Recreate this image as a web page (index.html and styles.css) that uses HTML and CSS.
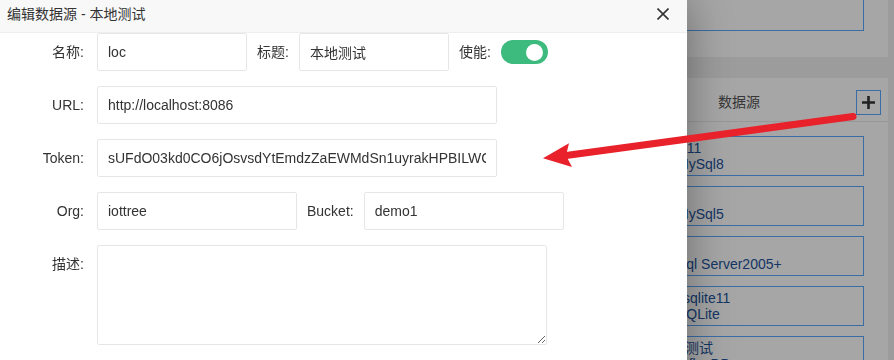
FILE: index.html
```html
<!doctype html>
<html lang="zh-CN">
<head>
  <meta charset="UTF-8" />
  <title>编辑数据源</title>
  <link rel="stylesheet" href="styles.css">
</head>
<body>
  <div class="page">
    <aside class="side">
      <div class="panel panel-top">
        <div class="src-card tall">
          <div>local</div>
          <div>InfluxDB</div>
        </div>
      </div>

      <div class="panel panel-list">
        <div class="panel-hd">
          <span class="panel-title">数据源</span>
          <button class="add-btn" type="button">
            <svg width="15" height="15" viewBox="0 0 15 15">
              <path d="M7.5 1v13M1 7.5h13" stroke="#333" stroke-width="2.6" fill="none" />
            </svg>
          </button>
        </div>
        <div class="card-list">
          <div class="src-card">
            <div class="pull-s">M11</div>
            <div>MySql8</div>
          </div>
          <div class="src-card">
            <div>s</div>
            <div>MySql5</div>
          </div>
          <div class="src-card">
            <div>s</div>
            <div>Sql Server2005+</div>
          </div>
          <div class="src-card">
            <div class="indent">sqlite11</div>
            <div>SQLite</div>
          </div>
          <div class="src-card">
            <div class="pull">本地测试</div>
            <div>InfluxDB</div>
          </div>
        </div>
      </div>
    </aside>
  </div>

  <div class="shade"></div>

  <div class="dialog">
    <div class="dialog-hd">
      <span class="dialog-title">编辑数据源 - 本地测试</span>
      <button class="close-btn" type="button">
        <svg width="12" height="12" viewBox="0 0 12 12">
          <path d="M0.5 0.5l11 11M11.5 0.5l-11 11" stroke="#333" stroke-width="1.6" fill="none" />
        </svg>
      </button>
    </div>

    <form class="dialog-bd">
      <div class="form-row">
        <label class="form-label">名称:</label>
        <input class="field w150" type="text" value="loc" />
        <label class="inline-label">标题:</label>
        <input class="field w150" type="text" value="本地测试" />
        <label class="inline-label">使能:</label>
        <span class="switch on"><i></i></span>
      </div>

      <div class="form-row">
        <label class="form-label">URL:</label>
        <input class="field w400" type="text" value="http://localhost:8086" />
      </div>

      <div class="form-row">
        <label class="form-label">Token:</label>
        <input class="field w400" type="text" value="sUFdO03kd0CO6jOsvsdYtEmdzZaEWMdSn1uyrakHPBILWGkVtZrQx4m7gJhR" />
      </div>

      <div class="form-row">
        <label class="form-label">Org:</label>
        <input class="field w200" type="text" value="iottree" />
        <label class="inline-label">Bucket:</label>
        <input class="field w200" type="text" value="demo1" />
      </div>

      <div class="form-row top">
        <label class="form-label">描述:</label>
        <textarea class="field area"></textarea>
      </div>
    </form>
  </div>

  <svg class="arrow" width="894" height="360" viewBox="0 0 894 360">
    <line x1="853" y1="116.5" x2="566" y2="155.5" stroke="#e8212a" stroke-width="7" stroke-linecap="round" />
    <polygon points="543,158.3 569,143.3 566,155.5 572,167" fill="#e8212a" />
  </svg>
</body>
</html>
```

FILE: styles.css
```css
* {
  box-sizing: border-box;
  margin: 0;
  padding: 0;
}

body {
  font-family: 'Liberation Sans', 'Noto Sans CJK SC', sans-serif;
  font-size: 14px;
  color: #333;
  background: #f0f0f0;
  width: 894px;
  height: 360px;
  overflow: hidden;
}

/* ===== page under the dialog ===== */
.page {
  display: flex;
  justify-content: flex-end;
  height: 360px;
  padding-right: 6px;
}

.side {
  width: 266px;
  display: flex;
  flex-direction: column;
  gap: 21px;
}

.panel {
  background: #fff;
}

.panel-top {
  height: 57px;
  display: flex;
  flex-direction: column;
  justify-content: flex-end;
  padding-bottom: 26px;
}

.panel-list {
  flex: 1;
}

.panel-hd {
  height: 44px;
  padding: 12px 7px 0 0;
  display: flex;
  align-items: flex-start;
  border-bottom: 1px solid #e8e8e8;
}

.panel-title {
  flex: 1;
  text-align: center;
  line-height: 24px;
  color: #555;
}

.add-btn {
  width: 25px;
  height: 25px;
  border: 1px solid #5aa8ff;
  background: none;
  display: flex;
  align-items: center;
  justify-content: center;
}

.card-list {
  padding-top: 14px;
  display: flex;
  flex-direction: column;
  gap: 10px;
}

.src-card {
  flex: none;
  height: 40px;
  margin: 0 24px;
  padding: 3px 0 0 30px;
  border: 1px solid #5aa8ff;
  color: #22539c;
  line-height: 16px;
  white-space: nowrap;
}

.src-card.tall {
  height: 80px;
}

.src-card .indent {
  padding-left: 6px;
}

.src-card .pull {
  margin-left: -20px;
}

.src-card .pull-s {
  margin-left: -2px;
}

.shade {
  position: fixed;
  inset: 0;
  background: rgba(0, 0, 0, 0.35);
}

/* ===== dialog ===== */
.dialog {
  position: absolute;
  top: 0;
  left: 0;
  width: 687px;
  height: 400px;
  background: #fff;
  box-shadow: 1px 1px 40px rgba(0, 0, 0, 0.35);
}

.dialog-hd {
  height: 33px;
  background: #f8f8f8;
  border-bottom: 1px solid #eee;
  display: flex;
  justify-content: space-between;
  align-items: flex-start;
  padding: 0 18px 0 7px;
}

.dialog-title {
  line-height: 28px;
  color: #333;
}

.close-btn {
  margin-top: 8px;
  background: none;
  border: none;
  width: 12px;
  height: 12px;
  display: flex;
}

.dialog-bd {
  display: flex;
  flex-direction: column;
  gap: 15px;
}

.form-row {
  display: flex;
  align-items: center;
  height: 38px;
}

.form-row.top {
  align-items: flex-start;
  height: auto;
}

.form-label {
  width: 84px;
  margin-right: 13px;
  text-align: right;
  line-height: 38px;
}

.inline-label {
  margin: 0 10px;
  line-height: 38px;
}

.field {
  height: 38px;
  border: 1px solid #e6e6e6;
  border-radius: 2px;
  padding: 0 10px;
  font: inherit;
  color: #333;
  background: #fff;
  outline: none;
}

.w150 { width: 150px; }
.w200 { width: 200px; }
.w400 { width: 400px; }

.field.area {
  width: 450px;
  height: 100px;
  padding: 6px 10px;
}

.switch {
  width: 47px;
  height: 24px;
  border-radius: 12px;
  background: #3dba7e;
  display: flex;
  align-items: center;
  justify-content: flex-end;
  padding-right: 5px;
}

.switch i {
  width: 17px;
  height: 17px;
  border-radius: 50%;
  background: #fff;
}

.arrow {
  position: absolute;
  top: 0;
  left: 0;
  pointer-events: none;
}
```
